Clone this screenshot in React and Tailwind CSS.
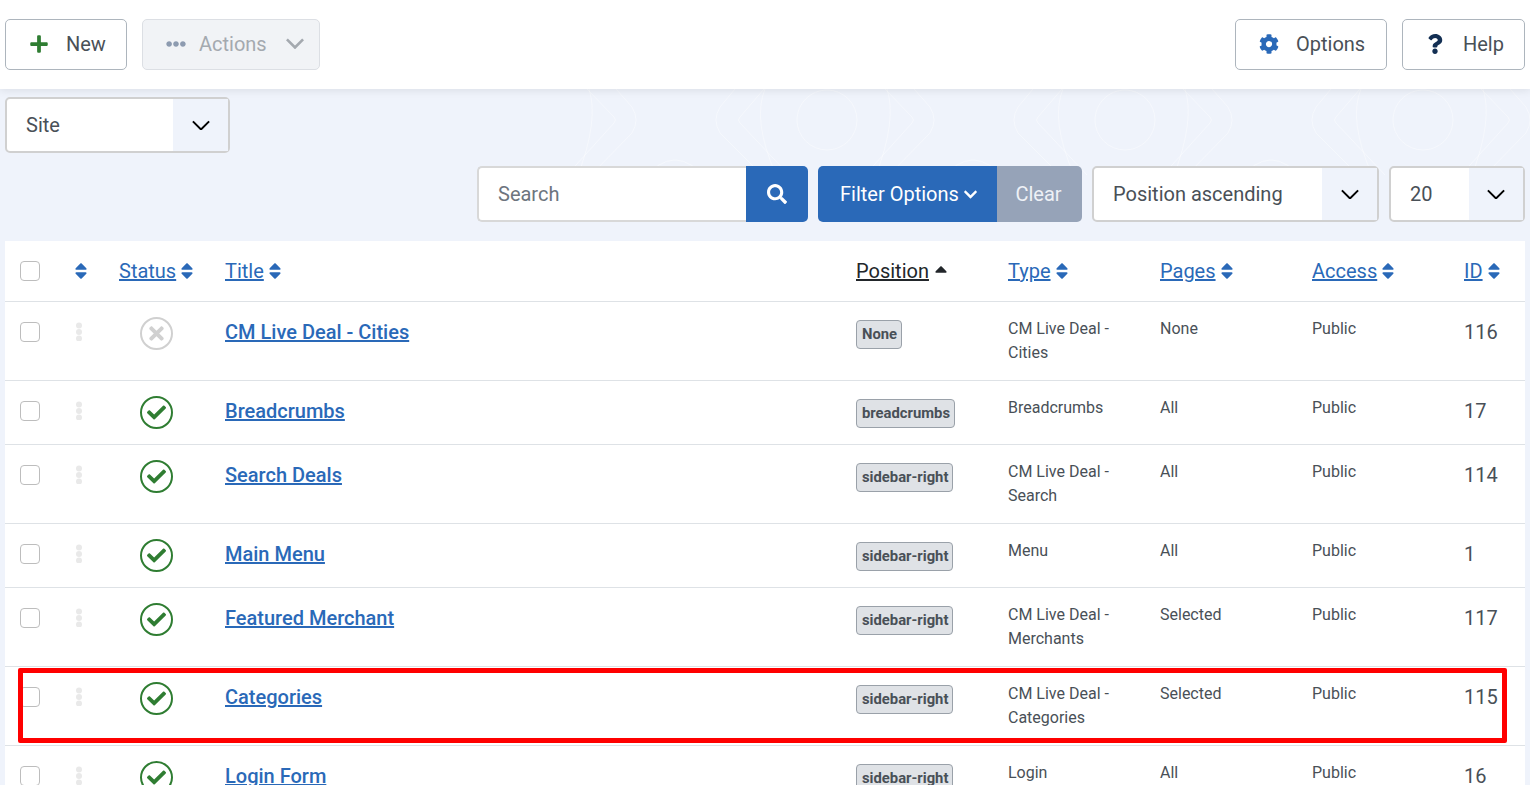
import React from "react";
import { FaPlus, FaEllipsisH, FaCog, FaQuestion, FaSearch, FaChevronDown, FaSort, FaSortUp, FaTimes, FaCheck } from "react-icons/fa";

const rows = [
  { title: "CM Live Deal - Cities", badge: "None", type: ["CM Live Deal -", "Cities"], pages: "None", id: "116", on: false, h: "h-[79px]" },
  { title: "Breadcrumbs", badge: "breadcrumbs", type: ["Breadcrumbs"], pages: "All", id: "17", on: true, h: "h-[64px]" },
  { title: "Search Deals", badge: "sidebar-right", type: ["CM Live Deal -", "Search"], pages: "All", id: "114", on: true, h: "h-[79px]" },
  { title: "Main Menu", badge: "sidebar-right", type: ["Menu"], pages: "All", id: "1", on: true, h: "h-[64px]" },
  { title: "Featured Merchant", badge: "sidebar-right", type: ["CM Live Deal -", "Merchants"], pages: "Selected", id: "117", on: true, h: "h-[79px]" },
  { title: "Categories", badge: "sidebar-right", type: ["CM Live Deal -", "Categories"], pages: "Selected", id: "115", on: true, h: "h-[79px]" },
  { title: "Login Form", badge: "sidebar-right", type: ["Login"], pages: "All", id: "16", on: true, h: "h-[64px]" },
];

const Chevron = ({ className, weight = 2.2 }) => (
  <svg viewBox="0 0 20 12" fill="none" className={className}>
    <path d="M1 1.5l9 9 9-9" stroke="currentColor" strokeWidth={weight} />
  </svg>
);

const ToolButton = ({ icon, label, className }) => (
  <button className={`flex h-[51px] items-center rounded-[5px] border border-[#adb5bd] bg-white pb-[2px] text-[20px] text-[#495057] ${className}`}>
    {icon}
    <span>{label}</span>
  </button>
);

const Select = ({ label, width, arrow }) => (
  <div className={`flex h-[56px] items-stretch rounded-[5px] border-2 border-[#d0d0d0] bg-white text-[20px] text-[#495057] ${width}`}>
    <div className="flex flex-1 items-center pl-[19px]">{label}</div>
    <div className={`flex items-center justify-center bg-[#eff3fb] text-black ${arrow}`}>
      <Chevron className="w-[18px]" />
    </div>
  </div>
);

const SortHead = ({ label, width }) => (
  <th className={`px-[15px] py-[15px] text-left align-middle font-normal ${width}`}>
    <span className="inline-flex items-center gap-[1px]">
      <a className="text-[20px] leading-[30px] text-[#2a69b8] underline">{label}</a>
      <FaSort className="text-[20px] text-[#2a69b8]" />
    </span>
  </th>
);

const Dots = () => (
  <svg viewBox="0 0 6 18" className="ml-[21px] mt-[5px] h-[19px] w-[6px]" fill="#e9e9e9">
    <circle cx="3" cy="3" r="3" />
    <circle cx="3" cy="9.5" r="3" />
    <circle cx="3" cy="16" r="3" />
  </svg>
);

const Status = ({ on }) =>
  on ? (
    <div className="ml-[21px] flex h-[33px] w-[33px] items-center justify-center rounded-full border-2 border-[#2f7d32] text-[#2f7d32]">
      <FaCheck className="text-[19px]" />
    </div>
  ) : (
    <div className="ml-[21px] flex h-[33px] w-[33px] items-center justify-center rounded-full border-2 border-[#d0d0d0] text-[#d0d0d0]">
      <FaTimes className="text-[21px]" />
    </div>
  );

const Checkbox = () => <div className="ml-[15px] mt-[5px] h-[20px] w-[20px] rounded-[4px] border border-[#bdbdbd] bg-white" />;

// faint line pattern behind the toolbar
const Backdrop = () => (
  <svg aria-hidden="true" className="absolute left-0 top-[89px] -z-10 h-[152px] w-[1530px]" fill="none" stroke="#ffffff" strokeOpacity="0.4">
    {[602, 900, 1198, 1496].map((x) => (
      <g key={x} transform={`translate(${x} 0)`}>
        <path d="M-15 0L12 28Q15 31 12 34L-35 86" />
        <path d="M14 0L30 18Q38 31 30 44L-11 86" />
        <path d="M162 0L138 28Q135 31 138 34L187 86" />
        <path d="M133 0L118 18Q110 31 118 44L160 86" />
        <path d="M-13 0Q-3 31 -24 86" />
        <path d="M163 0Q150 31 174 86" />
        <circle cx="225" cy="31" r="30" />
        <path d="M40 92Q73 50 106 92" />
      </g>
    ))}
  </svg>
);

export default function App() {
  return (
    <div className="relative isolate flex h-[785px] w-full flex-col overflow-hidden bg-[#eff3fb] font-['Roboto',sans-serif] text-[#495057]">
      <Backdrop />

      {/* Toolbar */}
      <header className="flex h-[89px] shrink-0 items-center justify-between bg-white px-[5px] shadow-[0_2px_8px_rgba(0,0,0,0.08)]">
        <div className="flex gap-[15px]">
          <ToolButton className="w-[122px] pl-[23px]" icon={<FaPlus className="mr-[17px] text-[20px] text-[#2f7d32]" />} label="New" />
          <button className="flex h-[51px] w-[178px] items-center rounded-[5px] border border-[#dcdfe4] bg-[#f1f3f6] pb-[2px] pl-[23px] text-[20px] text-[#a4a9af]">
            <FaEllipsisH className="mr-[13px] text-[20px] text-[#8d9bb0]" />
            <span>Actions</span>
            <Chevron className="ml-[19px] w-[18px] text-[#a4a9af]" weight={3} />
          </button>
        </div>
        <div className="flex gap-[15px]">
          <ToolButton className="w-[152px] pl-[23px]" icon={<FaCog className="mr-[17px] text-[20px] text-[#2a69b8]" />} label="Options" />
          <ToolButton className="w-[123px] pl-[22px]" icon={<FaQuestion className="mr-[18px] text-[20px] text-[#132f53]" />} label="Help" />
        </div>
      </header>

      <div className="ml-[5px] mt-[8px]">
        <Select label="Site" width="w-[225px]" arrow="w-[55px]" />
      </div>

      {/* Search and filters */}
      <div className="mt-[13px] flex justify-end gap-[10px] px-[5px]">
        <div className="flex">
          <div className="flex h-[56px] w-[269px] items-center rounded-l-[5px] border-2 border-r-0 border-[#d8d8d8] bg-white pl-[19px] text-[20px] text-[#6d757e]">Search</div>
          <button className="flex h-[56px] w-[62px] items-center justify-center rounded-r-[5px] bg-[#2a69b8] text-white">
            <FaSearch className="text-[20px]" />
          </button>
        </div>
        <div className="flex">
          <button className="flex h-[56px] w-[179px] items-center gap-[4px] rounded-l-[5px] bg-[#2a69b8] pl-[22px] text-[20px] text-white">
            Filter Options
            <FaChevronDown className="text-[15px]" />
          </button>
          <button className="h-[56px] w-[85px] rounded-r-[5px] bg-[#96a3b8] pr-[2px] text-[20px] text-[#eef1f6]">Clear</button>
        </div>
        <Select label="Position ascending" width="w-[287px]" arrow="w-[55px]" />
        <Select label="20" width="w-[136px]" arrow="w-[54px]" />
      </div>

      {/* Modules table */}
      <table className="mx-[5px] mt-[19px] w-[1520px] shrink-0 table-fixed border-collapse bg-white">
        <thead>
          <tr className="h-[60px] border-b border-[#dee2e6]">
            <th className="w-[50px] align-middle">
              <div className="ml-[15px] h-[20px] w-[20px] rounded-[4px] border border-[#bdbdbd] bg-white" />
            </th>
            <th className="w-[49px] align-middle">
              <FaSort className="ml-[16px] text-[20px] text-[#2a69b8]" />
            </th>
            <SortHead label="Status" width="w-[106px]" />
            <SortHead label="Title" width="w-[631px]" />
            <th className="w-[152px] px-[15px] text-left align-middle font-normal">
              <span className="inline-flex items-center gap-[2px]">
                <a className="text-[20px] leading-[30px] text-[#22262a] underline">Position</a>
                <FaSortUp className="mt-[5px] text-[20px] text-[#22262a]" />
              </span>
            </th>
            <SortHead label="Type" width="w-[152px]" />
            <SortHead label="Pages" width="w-[152px]" />
            <SortHead label="Access" width="w-[152px]" />
            <SortHead label="ID" width="w-[76px]" />
          </tr>
        </thead>
        <tbody>
          {rows.map((row) => (
            <tr key={row.title} className={`border-b border-[#dee2e6] ${row.h}`}>
              <td className="pt-[15px] align-top"><Checkbox /></td>
              <td className="pt-[15px] align-top"><Dots /></td>
              <td className="px-[15px] pt-[15px] align-top"><Status on={row.on} /></td>
              <td className="px-[15px] pt-[15px] align-top">
                <a className="text-[20px] font-medium leading-[30px] text-[#2a69b8] underline">{row.title}</a>
              </td>
              <td className="px-[15px] pt-[18px] align-top">
                <span className="inline-block h-[29px] rounded-[4px] border border-[#9aa1a9] bg-[#dfe2e6] pl-[5px] pr-[4px] text-[14.8px] font-bold leading-[27px] text-[#495057]">{row.badge}</span>
              </td>
              <td className="px-[15px] pt-[15px] align-top text-[16px] leading-[24px]">
                {row.type.map((line) => (
                  <div key={line}>{line}</div>
                ))}
              </td>
              <td className="px-[15px] pt-[15px] align-top text-[16px] leading-[24px]">{row.pages}</td>
              <td className="px-[15px] pt-[15px] align-top text-[16px] leading-[24px]">Public</td>
              <td className="px-[15px] pt-[15px] align-top text-[20px] leading-[30px]">{row.id}</td>
            </tr>
          ))}
        </tbody>
      </table>

      {/* Red annotation over the Categories row */}
      <div className="absolute left-[18px] top-[668px] h-[75px] w-[1489px] rounded-[2px] border-[5px] border-[#ff0000]" />
    </div>
  );
}
